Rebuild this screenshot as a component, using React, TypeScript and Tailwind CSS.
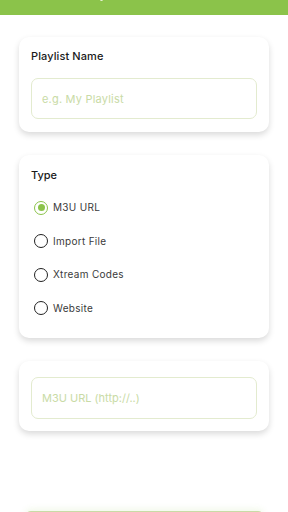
import { useState } from "react";

const options = ["M3U URL", "Import File", "Xtream Codes", "Website"];

export default function App() {
  const [type, setType] = useState("M3U URL");

  return (
    <div
      className="relative h-[512px] w-[288px] overflow-hidden bg-white"
      style={{ fontFamily: "Inter, 'Noto Sans', sans-serif" }}
    >
      <div className="relative h-[15px] w-full bg-[#8bc34a]">
        <span className="absolute left-[100px] top-[-2px] h-[3px] w-[3px] rounded-full bg-white/80"></span>
      </div>

      <div className="flex flex-col gap-[23px] px-[19px] pt-[22px]">
        <section className="flex h-[95px] flex-col rounded-[10px] bg-white px-[12px] pt-[11px] shadow-[0_3px_6px_rgba(0,0,0,0.15)]">
          <span className="text-[11px] leading-[16px] font-medium tracking-[0.1px] text-[#1a1a1a]">
            Playlist Name
          </span>
          <input
            placeholder="e.g. My Playlist"
            className="mt-[14px] h-[41px] w-full rounded-[7px] border border-[#e3ebcf] bg-white px-[10px] text-[11px] tracking-[0.2px] text-[#333] outline-none placeholder:text-[#c9dba6]"
          />
        </section>

        <section className="flex h-[183px] flex-col rounded-[10px] bg-white px-[12px] pt-[12px] shadow-[0_3px_6px_rgba(0,0,0,0.15)]">
          <span className="text-[11px] leading-[16px] font-medium text-[#1a1a1a]">
            Type
          </span>
          <div className="mt-[8px] flex flex-col">
            {options.map((o) => {
              const on = o === type;
              return (
                <button
                  key={o}
                  onClick={() => setType(o)}
                  className="flex h-[33.5px] items-center gap-[5px] pl-[3px] text-left"
                >
                  <span
                    className={
                      on
                        ? "flex h-[14px] w-[14px] items-center justify-center rounded-full border-[1.5px] border-[#8bc34a]"
                        : "flex h-[14px] w-[14px] items-center justify-center rounded-full border-[1.5px] border-[#222]"
                    }
                  >
                    {on && <span className="h-[7px] w-[7px] rounded-full bg-[#8bc34a]"></span>}
                  </span>
                  <span className="text-[10px] tracking-[0.3px] text-[#3a3a3a]">{o}</span>
                </button>
              );
            })}
          </div>
        </section>

        <section className="flex h-[70px] flex-col rounded-[10px] bg-white px-[12px] pt-[16px] shadow-[0_3px_6px_rgba(0,0,0,0.15)]">
          <input
            placeholder="M3U URL (http://..)"
            className="h-[42px] w-full rounded-[7px] border border-[#e3ebcf] bg-white px-[10px] text-[11px] text-[#333] outline-none placeholder:text-[#c9dba6]"
          />
        </section>
      </div>

      <div className="absolute left-[25px] top-[511px] h-[40px] w-[239px] rounded-[6px] border-t border-[#c9dba6] bg-white shadow-[0_-2px_6px_rgba(139,195,74,0.12)]"></div>
    </div>
  );
}
